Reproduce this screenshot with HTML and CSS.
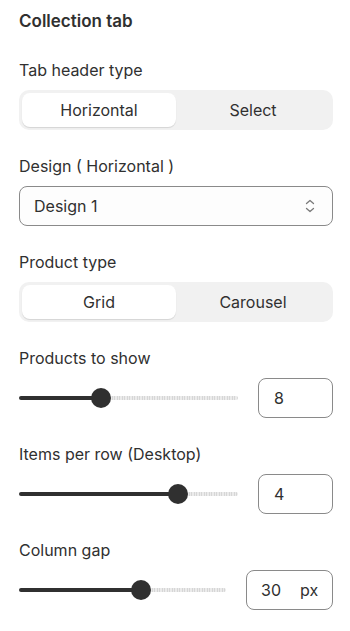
FILE: index.html
```html
<!DOCTYPE html>
<html lang="en">
<head>
    <meta charset="UTF-8">
    <meta name="viewport" content="width=device-width, initial-scale=1.0">
    <title>Collection tab</title>
    <link rel="stylesheet" href="styles.css">
</head>
<body>
    <div class="panel">
        <div class="panel-title">Collection tab</div>

        <div class="field">
            <div class="label">Tab header type</div>
            <div class="segmented">
                <div class="seg seg-on">Horizontal</div>
                <div class="seg">Select</div>
            </div>
        </div>

        <div class="field">
            <div class="label">Design ( Horizontal )</div>
            <div class="select">
                <span>Design 1</span>
                <svg class="chev" width="12" height="16" viewBox="0 0 12 16">
                    <path d="M2.5 5.5 L6 2.5 L9.5 5.5 M2.5 10.5 L6 13.5 L9.5 10.5" fill="none" stroke="#7a7a7a" stroke-width="1.3" stroke-linecap="round" stroke-linejoin="round"/>
                </svg>
            </div>
        </div>

        <div class="field">
            <div class="label">Product type</div>
            <div class="segmented">
                <div class="seg seg-on">Grid</div>
                <div class="seg">Carousel</div>
            </div>
        </div>

        <div class="field">
            <div class="label">Products to show</div>
            <div class="range-row">
                <div class="range">
                    <div class="fill" style="width: 82px"></div>
                    <div class="thumb"></div>
                    <div class="rest"></div>
                </div>
                <div class="num">8</div>
            </div>
        </div>

        <div class="field">
            <div class="label">Items per row (Desktop)</div>
            <div class="range-row">
                <div class="range">
                    <div class="fill" style="width: 159px"></div>
                    <div class="thumb"></div>
                    <div class="rest"></div>
                </div>
                <div class="num">4</div>
            </div>
        </div>

        <div class="field">
            <div class="label">Column gap</div>
            <div class="range-row">
                <div class="range">
                    <div class="fill" style="width: 122px"></div>
                    <div class="thumb"></div>
                    <div class="rest"></div>
                </div>
                <div class="num num-unit"><span>30</span><span class="unit">px</span></div>
            </div>
        </div>
    </div>
</body>
</html>
```

FILE: styles.css
```css
* {box-sizing: border-box;}
body {margin: 0; background: #fff; font-family: Inter, "Noto Sans", sans-serif; color: #303030;}

.panel {padding: 11px 17px 0 19px;}
.panel-title {font-size: 17px; font-weight: 600; line-height: 20px; margin-bottom: 29px;}

.field {margin-bottom: 26px;}
.label {font-size: 16px; line-height: 20px; margin-bottom: 10px;}

.segmented {display: flex; background: #f1f1f1; border-radius: 10px; padding: 3px; height: 40px;}
.seg {flex: 1; display: flex; align-items: center; justify-content: center; font-size: 16px; border-radius: 8px;}
.seg-on {background: #fff; box-shadow: 0 1px 1px rgba(0,0,0,0.12);}

.select {display: flex; align-items: center; justify-content: space-between; height: 40px; border: 1px solid #8a8a8a; border-radius: 8px; background: #fdfdfd; padding: 0 16px 0 14px; font-size: 16px;}
.chev {display: block;}

.range-row {display: flex; align-items: center; gap: 20px;}
.range {flex: 1; display: flex; align-items: center; height: 40px;}
.fill {height: 4px; background: #303030; border-radius: 2px 0 0 2px; margin-right: -10px;}
.thumb {width: 20px; height: 20px; border-radius: 50%; background: #303030; position: relative; z-index: 1; flex: none;}
.rest {flex: 1; height: 4px; margin-left: -4px; border-radius: 0 2px 2px 0; background: repeating-linear-gradient(90deg, #d6d6d6 0 1px, #ebebeb 1px 2.5px);}

.num {width: 75px; height: 40px; border: 1px solid #8a8a8a; border-radius: 8px; display: flex; align-items: center; padding-left: 15px; font-size: 16px; flex: none;}
.num-unit {width: 87px; padding-left: 14px;}
.unit {margin-left: 19px;}
```
